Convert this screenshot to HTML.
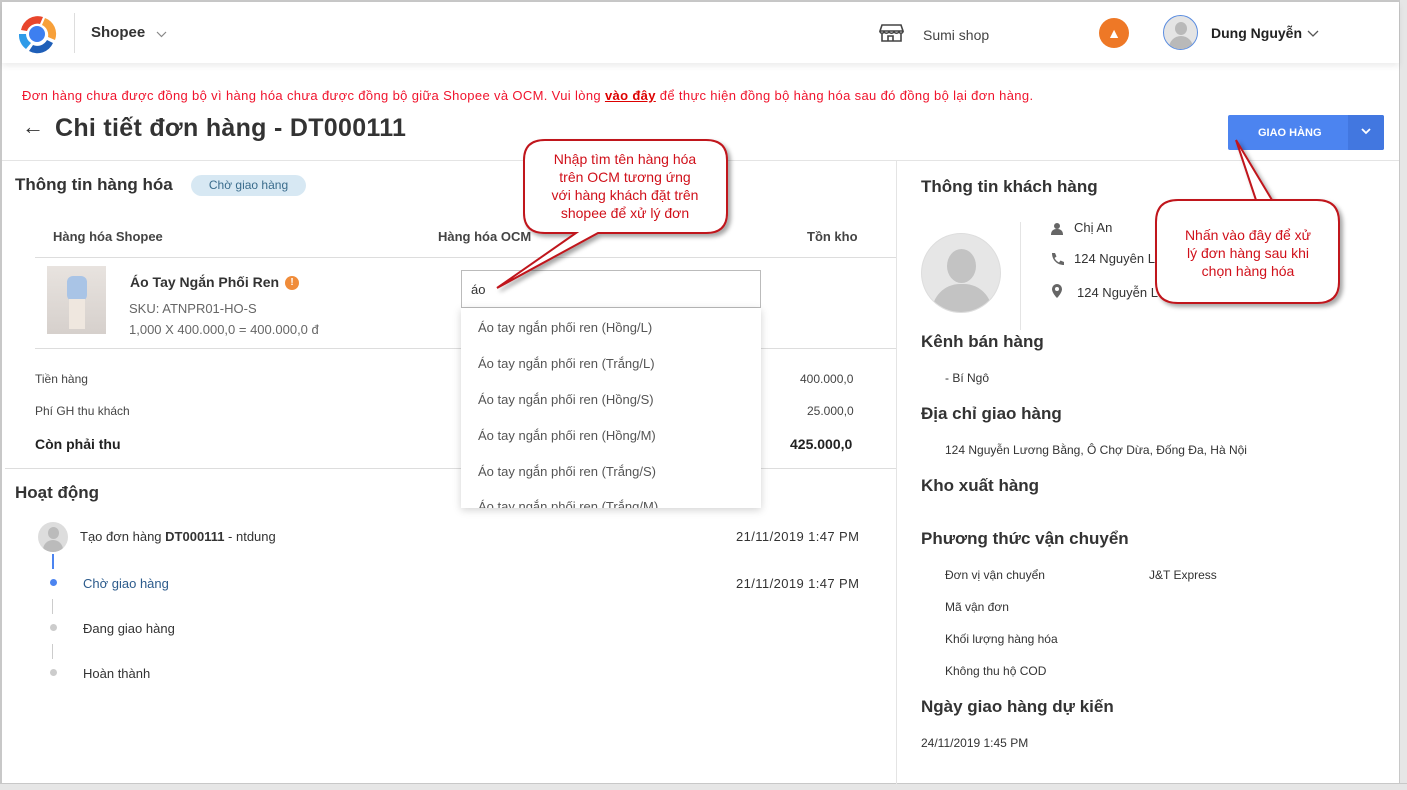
<!DOCTYPE html>
<html><head><meta charset="utf-8"><style>
*{box-sizing:border-box;margin:0;padding:0}
body{width:1407px;height:790px;position:relative;overflow:hidden;background:#fff;font-family:"Liberation Sans",Arial,sans-serif;color:#333}
.a{position:absolute;white-space:nowrap}
.h{font-weight:bold;font-size:18px;color:#333}
.s{font-size:13px;color:#444}
.dd{font-size:13px;color:#555}
</style></head><body>
<div class="a" style="left:0;top:0;width:1407px;height:2px;background:#c8c8c8"></div>
<div class="a" style="left:0;top:0;width:2px;height:790px;background:#c8c8c8"></div>
<div class="a" style="left:1399px;top:0;width:8px;height:790px;background:#e6e6e6;border-left:1px solid #c8c8c8"></div>
<div class="a" style="left:0;top:783px;width:1407px;height:7px;background:#e6e6e6;border-top:1px solid #c8c8c8"></div>
<div class="a" style="left:2px;top:2px;width:1397px;height:61px;background:#fff;box-shadow:0 3px 6px rgba(0,0,0,.08)"></div>
<svg class="a" style="left:15px;top:12px" width="44" height="44" viewBox="0 0 44 44">
<path d="M6 18 A17 17 0 0 1 28 5 L25 12 A11 11 0 0 0 12 19Z" fill="#e8452c"/>
<path d="M30 6 A17 17 0 0 1 40 28 L33 25 A11 11 0 0 0 27 13Z" fill="#f7a03a"/>
<path d="M38 31 A17 17 0 0 1 14 39 L18 33 A11 11 0 0 0 32 28Z" fill="#1f5fb8"/>
<path d="M11 37 A17 17 0 0 1 4 22 L11 22 A11 11 0 0 0 16 31Z" fill="#2f9be8"/>
<circle cx="22" cy="22" r="8" fill="#3d7ff0"/></svg>
<div class="a" style="left:74px;top:13px;width:1px;height:40px;background:#ddd"></div>
<div class="a" style="left:91px;top:24px;font-size:15px;font-weight:bold;color:#333">Shopee</div>
<svg class="a" style="left:156px;top:31px" width="11" height="7" viewBox="0 0 11 7"><path d="M1 1l4.5 4.5L10 1" fill="none" stroke="#888" stroke-width="1.2"/></svg>
<svg class="a" style="left:879px;top:23px" width="25" height="19" viewBox="0 0 25 19" fill="none" stroke="#444" stroke-width="1.6"><path d="M3 2h19l2 6H1z M1 8c0 3 4 3 4 0c0 3 5 3 5 0c0 3 5 3 5 0c0 3 5 3 5 0c0 3 4 3 4 0 M3 10v8h19v-8 M9 18v-5h5v5"/></svg>
<div class="a" style="left:923px;top:27px;font-size:14px;color:#444">Sumi shop</div>
<div class="a" style="left:1099px;top:18px;width:30px;height:30px;border-radius:50%;background:#ee7826;color:#fff;font-size:14px;text-align:center;line-height:30px;font-weight:bold">&#9650;</div>
<div class="a" style="left:1163px;top:15px;width:35px;height:35px;border-radius:50%;background:#e4e4e4;border:1px solid #5b8de0;overflow:hidden"><div style="position:absolute;left:11px;top:6px;width:12px;height:13px;border-radius:50%;background:#b9b9b9"></div><div style="position:absolute;left:5px;top:20px;width:24px;height:16px;border-radius:12px 12px 0 0;background:#b9b9b9"></div></div>
<div class="a" style="left:1211px;top:25px;font-size:14px;font-weight:bold;color:#222">Dung Nguyễn</div>
<svg class="a" style="left:1307px;top:30px" width="12" height="8" viewBox="0 0 12 8"><path d="M1 1l5 5 5-5" fill="none" stroke="#555" stroke-width="1.3"/></svg>
<div class="a" style="left:22px;top:88px;font-size:13px;letter-spacing:.35px;color:#f0142d">Đơn hàng chưa được đồng bộ vì hàng hóa chưa được đồng bộ giữa Shopee và OCM. Vui lòng <b style="text-decoration:underline;color:#d00">vào đây</b> để thực hiện đồng bộ hàng hóa sau đó đồng bộ lại đơn hàng.</div>
<div class="a" style="left:22px;top:114px;font-size:22px;color:#333">&#8592;</div>
<div class="a" style="left:55px;top:114px;font-size:25px;font-weight:bold;color:#333;letter-spacing:.3px">Chi tiết đơn hàng - DT000111</div>
<div class="a" style="left:1228px;top:115px;width:156px;height:35px;background:#4c84f0;border-radius:2px"></div>
<div class="a" style="left:1348px;top:115px;width:36px;height:35px;background:#4277e0;border-radius:0 2px 2px 0"></div>
<svg class="a" style="left:1361px;top:128px" width="10" height="7" viewBox="0 0 10 7"><path d="M1 1l4 4 4-4" fill="none" stroke="#fff" stroke-width="1.8"/></svg>
<div class="a" style="left:1258px;top:127px;font-size:11px;font-weight:bold;color:#fff">GIAO HÀNG</div>
<div class="a" style="left:2px;top:160px;width:1397px;height:1px;background:#e4e4e4"></div>
<div class="a" style="left:896px;top:160px;width:1px;height:624px;background:#e4e4e4"></div>
<div class="a h" style="left:15px;top:175px;font-size:17px">Thông tin hàng hóa</div>
<div class="a" style="left:191px;top:175px;width:115px;height:21px;border-radius:11px;background:#d7e8f3;color:#3a6c8c;font-size:12px;text-align:center;line-height:21px">Chờ giao hàng</div>
<div class="a" style="left:53px;top:229px;font-size:13px;font-weight:bold;color:#444">Hàng hóa Shopee</div>
<div class="a" style="left:438px;top:229px;font-size:13px;font-weight:bold;color:#444">Hàng hóa OCM</div>
<div class="a" style="left:807px;top:229px;font-size:13px;font-weight:bold;color:#444">Tồn kho</div>
<div class="a" style="left:35px;top:257px;width:861px;height:1px;background:#ddd"></div>
<div class="a" style="left:47px;top:266px;width:59px;height:68px;background:linear-gradient(180deg,#e8e3df,#d6d0cc)"><div style="position:absolute;left:20px;top:10px;width:20px;height:25px;background:#a9c4e6;border-radius:6px"></div><div style="position:absolute;left:22px;top:33px;width:16px;height:30px;background:#efe7df"></div></div>
<div class="a" style="left:130px;top:274px;font-size:14px;font-weight:bold;color:#333">Áo Tay Ngắn Phối Ren</div>
<div class="a" style="left:285px;top:276px;width:14px;height:14px;border-radius:50%;background:#f08c3a;color:#fff;font-size:10px;text-align:center;line-height:14px;font-weight:bold">!</div>
<div class="a s" style="left:129px;top:301px;color:#666">SKU: ATNPR01-HO-S</div>
<div class="a s" style="left:129px;top:322px;color:#666">1,000 X 400.000,0 = 400.000,0 đ</div>
<div class="a" style="left:35px;top:348px;width:861px;height:1px;background:#ddd"></div>
<div class="a" style="left:35px;top:372px;font-size:12px;color:#444">Tiền hàng</div>
<div class="a" style="left:800px;top:372px;font-size:12px;color:#444">400.000,0</div>
<div class="a" style="left:807px;top:404px;font-size:12px;color:#444">25.000,0</div>
<div class="a" style="left:35px;top:404px;font-size:12px;color:#444">Phí GH thu khách</div>
<div class="a" style="left:35px;top:436px;font-size:14px;font-weight:bold;color:#222">Còn phải thu</div>
<div class="a" style="left:790px;top:436px;font-size:14px;font-weight:bold;color:#222">425.000,0</div>
<div class="a" style="left:5px;top:468px;width:891px;height:1px;background:#ddd"></div>
<div class="a h" style="left:15px;top:483px;font-size:17px">Hoạt động</div>
<div class="a" style="left:38px;top:522px;width:30px;height:30px;border-radius:50%;background:#ddd;overflow:hidden"><div style="position:absolute;left:10px;top:5px;width:11px;height:12px;border-radius:50%;background:#bbb"></div><div style="position:absolute;left:5px;top:18px;width:20px;height:14px;border-radius:10px 10px 0 0;background:#bbb"></div></div>
<div class="a" style="left:80px;top:529px;font-size:13px;color:#333">Tạo đơn hàng <b>DT000111</b> - ntdung</div>
<div class="a" style="left:736px;top:529px;font-size:13px;letter-spacing:.4px;color:#333">21/11/2019 1:47 PM</div>
<div class="a" style="left:52px;top:554px;width:2px;height:15px;background:#4c84f0"></div>
<div class="a" style="left:50px;top:579px;width:7px;height:7px;border-radius:50%;background:#4c84f0"></div>
<div class="a" style="left:83px;top:576px;font-size:13px;color:#2c5b8c">Chờ giao hàng</div>
<div class="a" style="left:736px;top:576px;font-size:13px;letter-spacing:.4px;color:#333">21/11/2019 1:47 PM</div>
<div class="a" style="left:52px;top:599px;width:1px;height:15px;background:#ccc"></div>
<div class="a" style="left:50px;top:624px;width:7px;height:7px;border-radius:50%;background:#ccc"></div>
<div class="a" style="left:83px;top:621px;font-size:13px;color:#333">Đang giao hàng</div>
<div class="a" style="left:52px;top:644px;width:1px;height:15px;background:#ccc"></div>
<div class="a" style="left:50px;top:669px;width:7px;height:7px;border-radius:50%;background:#ccc"></div>
<div class="a" style="left:83px;top:666px;font-size:13px;color:#333">Hoàn thành</div>
<div class="a" style="left:461px;top:270px;width:300px;height:38px;border:1px solid #bbb;background:#fff"></div>
<div class="a" style="left:471px;top:282px;font-size:13px;color:#333">áo</div>
<div class="a" style="left:461px;top:308px;width:300px;height:200px;background:#fff;box-shadow:0 2px 8px rgba(0,0,0,.18);overflow:hidden">
<div class="a dd" style="left:17px;top:12px">Áo tay ngắn phối ren (Hồng/L)</div>
<div class="a dd" style="left:17px;top:48px">Áo tay ngắn phối ren (Trắng/L)</div>
<div class="a dd" style="left:17px;top:84px">Áo tay ngắn phối ren (Hồng/S)</div>
<div class="a dd" style="left:17px;top:120px">Áo tay ngắn phối ren (Hồng/M)</div>
<div class="a dd" style="left:17px;top:156px">Áo tay ngắn phối ren (Trắng/S)</div>
<div class="a dd" style="left:17px;top:191px">Áo tay ngắn phối ren (Trắng/M)</div>
</div>
<div class="a h" style="left:921px;top:177px;font-size:17px">Thông tin khách hàng</div>
<div class="a" style="left:1020px;top:222px;width:1px;height:108px;background:#e4e4e4"></div>
<div class="a" style="left:921px;top:233px;width:80px;height:80px;border-radius:50%;background:#e6e6e6;border:1px solid #ddd;overflow:hidden"><div style="position:absolute;left:25px;top:15px;width:29px;height:34px;border-radius:50%;background:#c3c3c3"></div><div style="position:absolute;left:10px;top:50px;width:60px;height:35px;border-radius:28px 28px 0 0;background:#c3c3c3"></div></div>
<div class="a" style="left:1051px;top:222px;width:12px;height:14px"><div style="position:absolute;left:3px;top:1px;width:6px;height:6px;border-radius:50%;background:#666"></div><div style="position:absolute;left:0;top:7px;width:12px;height:6px;border-radius:5px 5px 0 0;background:#666"></div></div>
<div class="a s" style="left:1074px;top:220px;color:#333">Chị An</div>
<svg class="a" style="left:1050px;top:252px" width="14" height="14" viewBox="0 0 14 14"><path d="M2 1l3 0 1.5 3.5-2 1.5c1 2 2.5 3.5 4.5 4.5l1.5-2 3.5 1.5v3c-7 0-12-5-12-12z" fill="#666"/></svg>
<div class="a s" style="left:1074px;top:251px;color:#333">124 Nguyên L</div>
<svg class="a" style="left:1052px;top:284px" width="10" height="14" viewBox="0 0 10 14"><path d="M5 0a5 5 0 0 1 5 5c0 4-5 9-5 9S0 9 0 5a5 5 0 0 1 5-5z" fill="#666"/><circle cx="5" cy="5" r="2" fill="#fff"/></svg>
<div class="a s" style="left:1077px;top:285px;color:#333">124 Nguyễn L</div>
<div class="a h" style="left:921px;top:332px;font-size:17px">Kênh bán hàng</div>
<div class="a" style="left:945px;top:371px;font-size:12px;color:#333">- Bí Ngô</div>
<div class="a h" style="left:921px;top:404px;font-size:17px">Địa chỉ giao hàng</div>
<div class="a" style="left:945px;top:443px;font-size:12px;color:#333">124 Nguyễn Lương Bằng, Ô Chợ Dừa, Đống Đa, Hà Nội</div>
<div class="a h" style="left:921px;top:476px;font-size:17px">Kho xuất hàng</div>
<div class="a h" style="left:921px;top:529px;font-size:17px">Phương thức vận chuyển</div>
<div class="a" style="left:945px;top:568px;font-size:12px;color:#333">Đơn vị vận chuyển</div>
<div class="a" style="left:1149px;top:568px;font-size:12px;color:#333">J&amp;T Express</div>
<div class="a" style="left:945px;top:600px;font-size:12px;color:#333">Mã vận đơn</div>
<div class="a" style="left:945px;top:632px;font-size:12px;color:#333">Khối lượng hàng hóa</div>
<div class="a" style="left:945px;top:664px;font-size:12px;color:#333">Không thu hộ COD</div>
<div class="a h" style="left:921px;top:697px;font-size:17px">Ngày giao hàng dự kiến</div>
<div class="a" style="left:921px;top:736px;font-size:12px;color:#333">24/11/2019 1:45 PM</div>
<svg class="a" style="left:0;top:0" width="1407" height="790" viewBox="0 0 1407 790">
<defs><filter id="sh"><feDropShadow dx="3" dy="3" stdDeviation="2" flood-opacity=".35"/></filter></defs>
<path d="M545 140 H706 Q727 140 727 160 V213 Q727 233 706 233 H598 L497 288 L576 233 H545 Q524 233 524 213 V160 Q524 140 545 140Z" fill="#fff" stroke="#c0141c" stroke-width="2" filter="url(#sh)"/>
<path d="M1178 200 H1317 Q1339 200 1339 222 V282 Q1339 303 1317 303 H1178 Q1156 303 1156 282 V222 Q1156 200 1178 200 H1256 L1236 140 L1272 200" fill="#fff" stroke="#c0141c" stroke-width="2" filter="url(#sh)"/>
<g font-family="Liberation Sans, sans-serif" font-size="14" fill="#d0101a" text-anchor="middle">
<text x="625" y="164">Nhập tìm tên hàng hóa</text>
<text x="625" y="182">trên OCM tương ứng</text>
<text x="625" y="200">với hàng khách đặt trên</text>
<text x="625" y="218">shopee để xử lý đơn</text>
<text x="1248" y="240">Nhấn vào đây để xử</text>
<text x="1248" y="258">lý đơn hàng sau khi</text>
<text x="1248" y="276">chọn hàng hóa</text>
</g></svg>
</body></html>
